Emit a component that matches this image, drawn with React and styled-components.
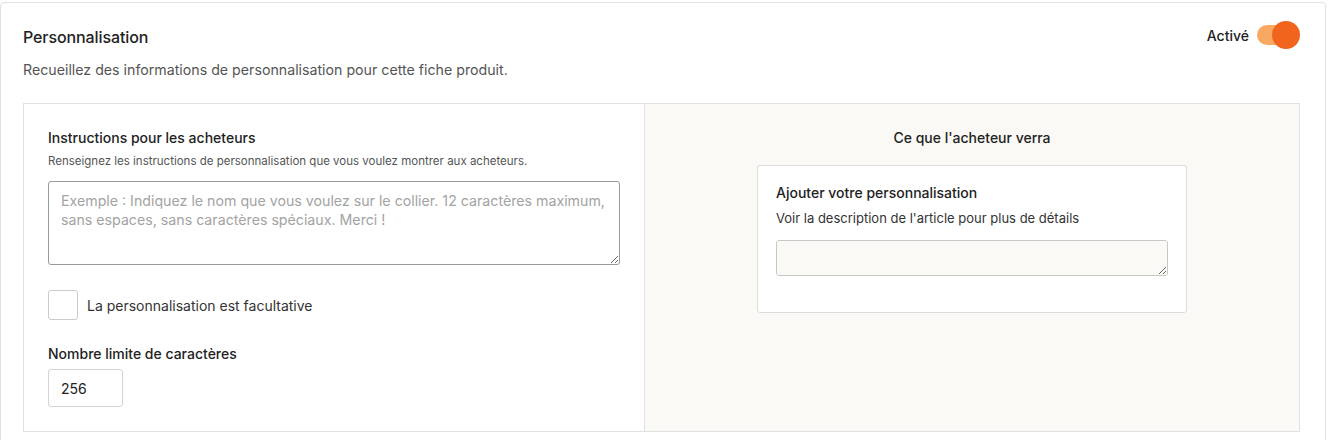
import React, { useState } from 'react';
import styled, { createGlobalStyle } from 'styled-components';

const GlobalStyle = createGlobalStyle`
    body {
        margin: 0;
        background: #ffffff;
        font-family: Inter, "Noto Sans", sans-serif;
        color: #222222;
    }
    * {
        box-sizing: border-box;
    }
`;

const Card = styled.section`
    margin-top: 2px;
    width: 1326px;
    min-height: 460px;
    border: 1px solid #e1e1e1;
    border-radius: 4px;
    padding: 22px 25px 0 22px;
`;

const Header = styled.div`
    display: flex;
    justify-content: space-between;
    align-items: flex-start;
    padding-right: 9px;
`;

const Title = styled.h2`
    margin: 2px 0 0;
    font-size: 16px;
    font-weight: 500;
    letter-spacing: -0.1px;
`;

const Description = styled.p`
    margin: 14px 0 25px;
    font-size: 14.2px;
    color: #555555;
`;

const ToggleWrap = styled.label`
    display: flex;
    align-items: center;
    gap: 8px;
    font-size: 14px;
    font-weight: 500;
    cursor: pointer;
`;

const Track = styled.span`
    position: relative;
    width: 34px;
    height: 20px;
    border-radius: 10px;
    background: ${(p) => (p.$on ? '#f9a862' : '#cccccc')};
`;

const Thumb = styled.span`
    position: absolute;
    top: -4px;
    left: ${(p) => (p.$on ? '15px' : '-4px')};
    width: 28px;
    height: 28px;
    border-radius: 50%;
    background: ${(p) => (p.$on ? '#f1641e' : '#ffffff')};
    transition: left 0.15s ease;
`;

const Panel = styled.div`
    display: grid;
    grid-template-columns: 621px 1fr;
    border: 1px solid #e1e1e1;
    min-height: 329px;
`;

const FormSide = styled.div`
    padding: 25px 24px 24px 24px;
    border-right: 1px solid #e1e1e1;
`;

const PreviewSide = styled.div`
    background: #faf9f5;
    padding: 25px 24px;
    display: flex;
    flex-direction: column;
    align-items: center;
`;

const FieldLabel = styled.div`
    font-size: 14px;
    font-weight: 500;
    margin-bottom: ${(p) => p.$gap || '6px'};
`;

const Hint = styled.div`
    font-size: 11.5px;
    color: #555555;
    margin: 8px 0 13px;
`;

const TextArea = styled.textarea`
    display: block;
    width: 100%;
    height: ${(p) => p.$h || '84px'};
    padding: 9px 12px;
    border: 1px solid ${(p) => (p.$soft ? '#c7c7c7' : '#999999')};
    border-radius: 3px;
    background: ${(p) => p.$bg || '#ffffff'};
    font-family: inherit;
    font-size: 14.2px;
    line-height: 19px;
    color: #222222;

    &::placeholder {
        color: #a3a3a3;
    }
`;

const CheckRow = styled.label`
    display: flex;
    align-items: center;
    gap: 9px;
    margin: 25px 0 25px;
    font-size: 14px;
    color: #333333;
`;

const Box = styled.input`
    appearance: none;
    margin: 0;
    width: 30px;
    height: 30px;
    border: 1px solid #cccccc;
    border-radius: 3px;
    background: #ffffff;

    &:checked {
        background: #222222;
    }
`;

const NumberInput = styled.input`
    display: block;
    width: 75px;
    height: 38px;
    padding: 0 12px;
    border: 1px solid #d5d5d5;
    border-radius: 3px;
    font-family: inherit;
    font-size: 14px;
    color: #222222;
`;

const PreviewTitle = styled.div`
    font-size: 14px;
    font-weight: 500;
    margin-bottom: 19px;
`;

const PreviewCard = styled.div`
    width: 430px;
    padding: 18px 18px 36px 18px;
    background: #ffffff;
    border: 1px solid #dddddd;
    border-radius: 3px;
`;

const PreviewText = styled.div`
    font-size: 13px;
    color: #333333;
    margin-bottom: 14px;
`;

const App = () => {
    const [enabled, setEnabled] = useState(true);
    const [optional, setOptional] = useState(false);
    const [limit, setLimit] = useState('256');

    return (
        <>
            <GlobalStyle />
            <Card>
                <Header>
                    <Title>Personnalisation</Title>
                    <ToggleWrap onClick={() => setEnabled(!enabled)}>
                        {enabled ? 'Activé' : 'Désactivé'}
                        <Track $on={enabled}>
                            <Thumb $on={enabled} />
                        </Track>
                    </ToggleWrap>
                </Header>
                <Description>
                    Recueillez des informations de personnalisation pour cette fiche produit.
                </Description>
                <Panel>
                    <FormSide>
                        <FieldLabel $gap="0">Instructions pour les acheteurs</FieldLabel>
                        <Hint>
                            Renseignez les instructions de personnalisation que vous voulez montrer aux acheteurs.
                        </Hint>
                        <TextArea placeholder="Exemple : Indiquez le nom que vous voulez sur le collier. 12 caractères maximum, sans espaces, sans caractères spéciaux. Merci !" />
                        <CheckRow>
                            <Box
                                type="checkbox"
                                checked={optional}
                                onChange={(e) => setOptional(e.target.checked)}
                            />
                            La personnalisation est facultative
                        </CheckRow>
                        <FieldLabel $gap="7px">Nombre limite de caractères</FieldLabel>
                        <NumberInput value={limit} onChange={(e) => setLimit(e.target.value)} />
                    </FormSide>
                    <PreviewSide>
                        <PreviewTitle>Ce que l'acheteur verra</PreviewTitle>
                        <PreviewCard>
                            <FieldLabel $gap="9px">Ajouter votre personnalisation</FieldLabel>
                            <PreviewText>Voir la description de l'article pour plus de détails</PreviewText>
                            <TextArea $h="36px" $bg="#faf9f5" $soft />
                        </PreviewCard>
                    </PreviewSide>
                </Panel>
            </Card>
        </>
    );
};

export default App;
